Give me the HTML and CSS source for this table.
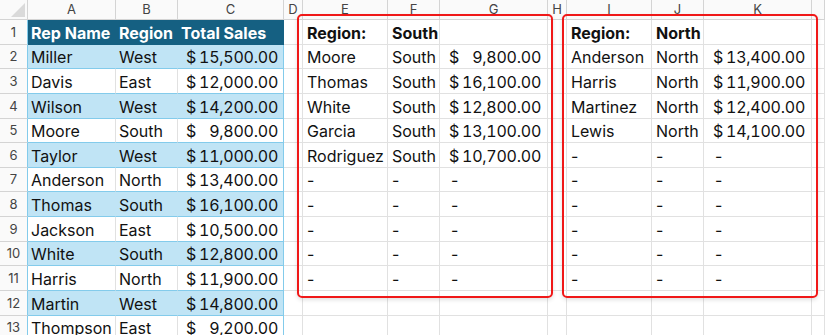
FILE: index.html
```html
<!DOCTYPE html>
<html>
<head>
<meta charset="utf-8">
<link rel="stylesheet" href="styles.css">
</head>
<body>
<div class="sheet">
  <div class="row hdr">
    <div class="c corner"><span class="tri"></span></div>
    <div class="c ch">A</div><div class="c ch">B</div><div class="c ch">C</div><div class="c ch">D</div>
    <div class="c ch">E</div><div class="c ch">F</div><div class="c ch">G</div><div class="c ch">H</div>
    <div class="c ch">I</div><div class="c ch">J</div><div class="c ch">K</div><div class="c ch"></div>
  </div>

  <div class="row">
    <div class="c rh tb">1</div>
    <div class="c th">Rep Name</div><div class="c th">Region</div><div class="c th">Total Sales</div>
    <div class="c"></div>
    <div class="c b">Region:</div><div class="c b">South</div><div class="c"></div><div class="c"></div>
    <div class="c b">Region:</div><div class="c b">North</div><div class="c"></div><div class="c"></div>
  </div>

  <div class="row">
    <div class="c rh tb">2</div>
    <div class="c band">Miller</div><div class="c band">West</div><div class="c band last acc"><span>$</span><span class="n">15,500.00</span></div>
    <div class="c"></div>
    <div class="c">Moore</div><div class="c">South</div><div class="c acc"><span>$</span><span class="n">9,800.00</span></div><div class="c"></div>
    <div class="c">Anderson</div><div class="c">North</div><div class="c acc"><span>$</span><span class="n">13,400.00</span></div><div class="c"></div>
  </div>

  <div class="row">
    <div class="c rh tb">3</div>
    <div class="c wr">Davis</div><div class="c wr">East</div><div class="c wr last acc"><span>$</span><span class="n">12,000.00</span></div>
    <div class="c"></div>
    <div class="c">Thomas</div><div class="c">South</div><div class="c acc"><span>$</span><span class="n">16,100.00</span></div><div class="c"></div>
    <div class="c">Harris</div><div class="c">North</div><div class="c acc"><span>$</span><span class="n">11,900.00</span></div><div class="c"></div>
  </div>

  <div class="row">
    <div class="c rh tb">4</div>
    <div class="c band">Wilson</div><div class="c band">West</div><div class="c band last acc"><span>$</span><span class="n">14,200.00</span></div>
    <div class="c"></div>
    <div class="c">White</div><div class="c">South</div><div class="c acc"><span>$</span><span class="n">12,800.00</span></div><div class="c"></div>
    <div class="c">Martinez</div><div class="c">North</div><div class="c acc"><span>$</span><span class="n">12,400.00</span></div><div class="c"></div>
  </div>

  <div class="row">
    <div class="c rh tb">5</div>
    <div class="c wr">Moore</div><div class="c wr">South</div><div class="c wr last acc"><span>$</span><span class="n">9,800.00</span></div>
    <div class="c"></div>
    <div class="c">Garcia</div><div class="c">South</div><div class="c acc"><span>$</span><span class="n">13,100.00</span></div><div class="c"></div>
    <div class="c">Lewis</div><div class="c">North</div><div class="c acc"><span>$</span><span class="n">14,100.00</span></div><div class="c"></div>
  </div>

  <div class="row">
    <div class="c rh tb">6</div>
    <div class="c band">Taylor</div><div class="c band">West</div><div class="c band last acc"><span>$</span><span class="n">11,000.00</span></div>
    <div class="c"></div>
    <div class="c">Rodriguez</div><div class="c">South</div><div class="c acc"><span>$</span><span class="n">10,700.00</span></div><div class="c"></div>
    <div class="c">-</div><div class="c">-</div><div class="c dash">-</div><div class="c"></div>
  </div>

  <div class="row">
    <div class="c rh tb">7</div>
    <div class="c wr">Anderson</div><div class="c wr">North</div><div class="c wr last acc"><span>$</span><span class="n">13,400.00</span></div>
    <div class="c"></div>
    <div class="c">-</div><div class="c">-</div><div class="c dash">-</div><div class="c"></div>
    <div class="c">-</div><div class="c">-</div><div class="c dash">-</div><div class="c"></div>
  </div>

  <div class="row">
    <div class="c rh tb">8</div>
    <div class="c band">Thomas</div><div class="c band">South</div><div class="c band last acc"><span>$</span><span class="n">16,100.00</span></div>
    <div class="c"></div>
    <div class="c">-</div><div class="c">-</div><div class="c dash">-</div><div class="c"></div>
    <div class="c">-</div><div class="c">-</div><div class="c dash">-</div><div class="c"></div>
  </div>

  <div class="row">
    <div class="c rh tb">9</div>
    <div class="c wr">Jackson</div><div class="c wr">East</div><div class="c wr last acc"><span>$</span><span class="n">10,500.00</span></div>
    <div class="c"></div>
    <div class="c">-</div><div class="c">-</div><div class="c dash">-</div><div class="c"></div>
    <div class="c">-</div><div class="c">-</div><div class="c dash">-</div><div class="c"></div>
  </div>

  <div class="row">
    <div class="c rh tb">10</div>
    <div class="c band">White</div><div class="c band">South</div><div class="c band last acc"><span>$</span><span class="n">12,800.00</span></div>
    <div class="c"></div>
    <div class="c">-</div><div class="c">-</div><div class="c dash">-</div><div class="c"></div>
    <div class="c">-</div><div class="c">-</div><div class="c dash">-</div><div class="c"></div>
  </div>

  <div class="row">
    <div class="c rh tb">11</div>
    <div class="c wr">Harris</div><div class="c wr">North</div><div class="c wr last acc"><span>$</span><span class="n">11,900.00</span></div>
    <div class="c"></div>
    <div class="c">-</div><div class="c">-</div><div class="c dash">-</div><div class="c"></div>
    <div class="c">-</div><div class="c">-</div><div class="c dash">-</div><div class="c"></div>
  </div>

  <div class="row">
    <div class="c rh tb">12</div>
    <div class="c band">Martin</div><div class="c band">West</div><div class="c band last acc"><span>$</span><span class="n">14,800.00</span></div>
    <div class="c"></div>
    <div class="c"></div><div class="c"></div><div class="c"></div><div class="c"></div>
    <div class="c"></div><div class="c"></div><div class="c"></div><div class="c"></div>
  </div>

  <div class="row">
    <div class="c rh tb">13</div>
    <div class="c wr">Thompson</div><div class="c wr">East</div><div class="c wr last acc"><span>$</span><span class="n">9,200.00</span></div>
    <div class="c"></div>
    <div class="c"></div><div class="c"></div><div class="c"></div><div class="c"></div>
    <div class="c"></div><div class="c"></div><div class="c"></div><div class="c"></div>
  </div>

  <div class="box box-south"></div>
  <div class="box box-north"></div>
</div>
</body>
</html>
```
FILE: styles.css
```css
* { box-sizing: border-box; }
html, body { margin: 0; padding: 0; background: #fff; }
body { overflow: hidden; }

.sheet {
  position: relative;
  width: 825px;
  height: 335px;
  overflow: hidden;
  font-family: Inter, "Open Sans", sans-serif;
  font-size: 16px;
  color: #111;
}

.row {
  display: grid;
  grid-template-columns: 28px 88px 62px 106px 19px 85px 52px 108px 19px 85px 52px 108px 1fr;
  height: 24.64px;
}
.row.hdr { height: 20px; }

.c {
  border-right: 1px solid #e1e1e1;
  border-bottom: 1px solid #e1e1e1;
  padding: 0 4px 1px;
  line-height: 20px;
  white-space: nowrap;
  overflow: hidden;
  display: flex;
  align-items: flex-end;
}

.hdr .c {
  background: #fafafa;
  border-color: #d4d4d4;
  font-size: 13px;
  color: #444;
  justify-content: center;
  align-items: center;
  line-height: 19px;
  padding: 0;
}
.corner { position: relative; }
.tri {
  position: absolute;
  right: 2px;
  bottom: 2px;
  width: 14px;
  height: 14px;
  background: #dadada;
  clip-path: polygon(100% 0, 100% 100%, 0 100%);
}

.rh {
  background: #fafafa;
  border-color: #d4d4d4;
  font-size: 13px;
  color: #444;
  justify-content: center;
  padding: 0 0 2px;
}
.rh.tb { border-right-color: #83cbeb; }

.th {
  background: #156082;
  border-color: #156082;
  color: #fff;
  font-weight: 700;
  padding-left: 3px;
}
.band {
  background: #c0e4f5;
  border-right-color: #c0e4f5;
  border-bottom-color: #83cbeb;
  padding-left: 3px;
}
.wr {
  background: #fff;
  border-bottom-color: #83cbeb;
  padding-left: 3px;
}
.last { border-right-color: #83cbeb; }

.b { font-weight: 700; }

.acc {
  justify-content: space-between;
  padding-left: 9px;
  padding-right: 6px;
  font-variant-numeric: tabular-nums;
}
.acc.last {
  padding-left: 8px;
  padding-right: 5px;
}
.n { letter-spacing: -0.25px; }
.dash { padding-left: 11px; }

.box {
  position: absolute;
  top: 14px;
  height: 284px;
  width: 256px;
  border: 2px solid #f01818;
  border-radius: 5px;
  box-shadow: 0 2px 4px rgba(0, 0, 0, 0.12);
  pointer-events: none;
}
.box-south { left: 297px; }
.box-north { left: 562px; }
```
